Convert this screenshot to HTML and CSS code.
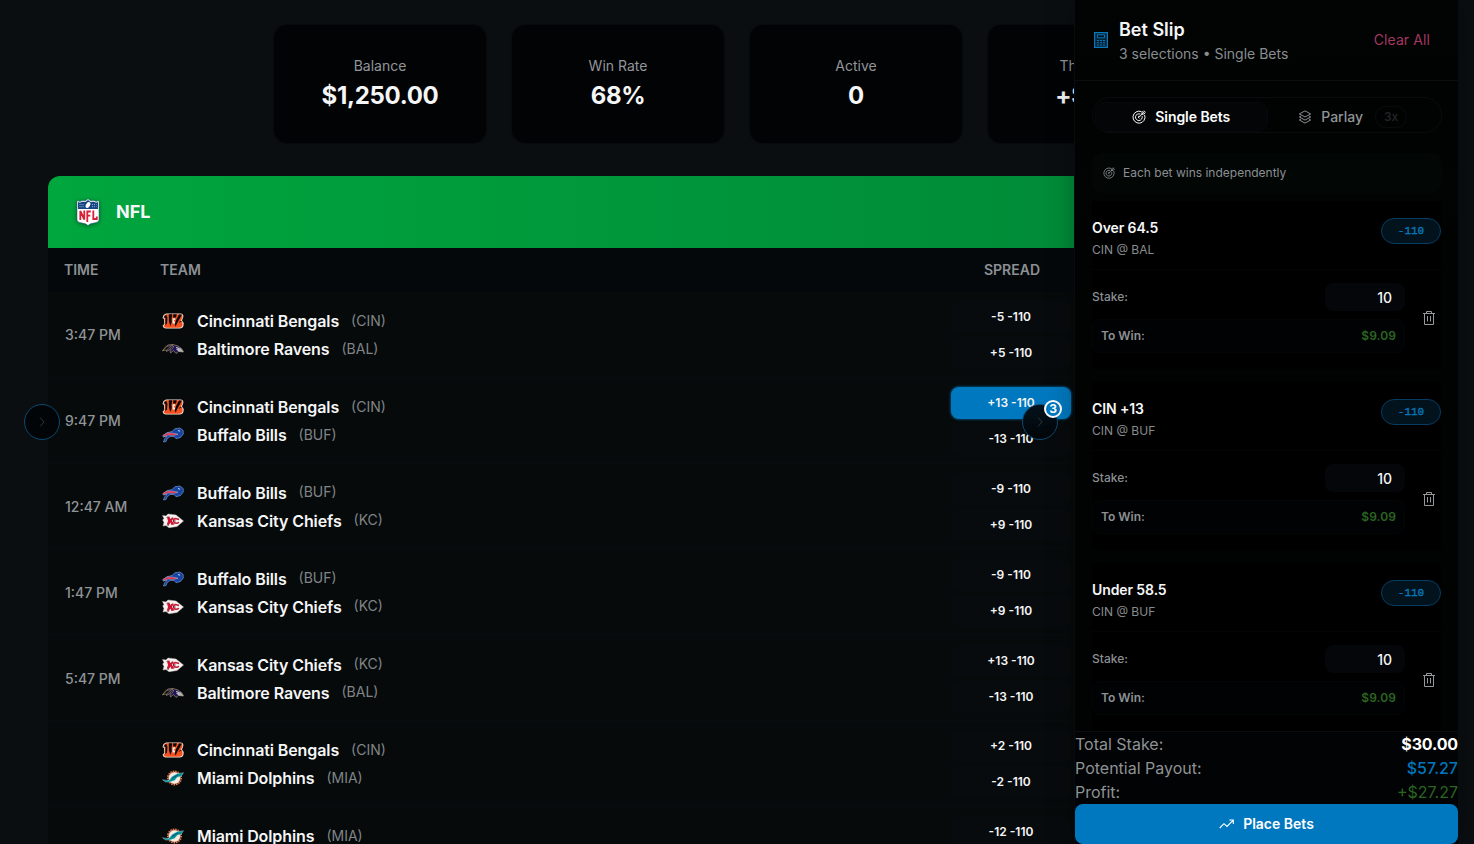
FILE: index.html
```
<!DOCTYPE html>
<html lang="en">
<head>
<meta charset="utf-8">
<title>Sportsbook</title>
<link rel="stylesheet" href="styles.css">
</head>
<body>
<svg class="sprite" aria-hidden="true">
  <symbol id="cin" viewBox="0 0 22 16">
    <path d="M1.500 2 4 .5H18.500Q21.800 .6 21.300 4L20 7.500Q22 9 21.500 12.500Q21 15.500 17.500 15.500H4Q1 15.500 .6 12.500L2.300 11 2 6 .5 5Z" fill="#f4e2d8"/>
    <path d="M2.300 2.300 4.500 1.300H18.500Q20.800 1.500 20.500 4L19 7.500Q21 9 20.600 12.200Q20 14.700 17 14.700H4.500Q2 14.600 1.400 12.700L3.200 11.500Z" fill="#f4511e"/>
    <path d="M1.300 4.200 4.300 1.700 5.400 5 5 10.500 3.300 12.300 3.500 5ZM6.800 1.300H10.300L9.600 5 9.700 9.500 8.300 13 7 8.500ZM11.300 1.300H14.800L14 4.600H11ZM17 1.500H20L17.500 6 15.500 9.500 13.500 13.700 12.800 11 14.300 6.500ZM20 8 16.800 10 18 8Z" fill="#0b0908"/>
    <path d="M10.600 5.300H13.200V7H12V8.600H13V10.500H10.600Z" fill="#f5eee9"/>
  </symbol>
  <symbol id="bal" viewBox="0 0 22 16">
    <path d="M.5 10 3 6.500 6 4 11 3.500 16 5 20 8 21.500 11 16.500 10.500 14 12.500 11.500 9.500 8.500 12 8 8.500 4.500 10.500 4 8Z" fill="#1d145a" stroke="#a8946a" stroke-width=".7"/>
    <path d="M1 9.500 5 5.500 11 4 7 6.500 5 9ZM8 7.500 12 5 10 8.500Z" fill="#090909" stroke="#ae996a" stroke-width=".5"/>
    <path d="M14 8 18.500 7 21.500 11 16.500 10.500Z" fill="#b9b6b3"/>
    <path d="M14 6.500 17 7.300" stroke="#fff" stroke-width=".8"/>
  </symbol>
  <symbol id="buf" viewBox="0 0 22 16">
    <path d="M1 8.500 5 5.700 10 4.500 13 1.700 18 1 21.200 3.500 21.300 7 18.500 10.500 14 11.700 12 9.500 8 9.500 5 12 4 14.500 1.500 15 2.500 12 5 9.500 1 10Z" fill="#1746a2" stroke="#85a5dc" stroke-width=".6"/>
    <path d="M1 8.500 5.500 6 11 6.200 16 7.200 12 8.300 6 8 2 9.500Z" fill="#e12242" stroke="#e8d5e0" stroke-width=".4"/>
    <path d="M16 3.500 18 4.200" stroke="#fff" stroke-width=".8"/>
  </symbol>
  <symbol id="kc" viewBox="0 0 22 16">
    <path d="M.5 2.500 4 3 6 1 14 2 21.500 8 15 13.500 7 14.700 4 12.500 1 13 2 9.500 .7 7 2 5.500Z" fill="#f5f3f1" stroke="#c9bdb8" stroke-width=".5"/>
    <path d="M5 4.500 7.500 3.500 8.200 6 10.500 4.200 12 5 9.800 7.800 12.500 11.500 9.500 12 8.300 9.500 7 12 4.800 11.500 6 8Z" fill="#c81733"/>
    <path d="M17 6.500 13.500 5.500Q10.800 6.500 11.800 9Q13.500 11.300 17 9.300" fill="none" stroke="#c81733" stroke-width="1.500"/>
    <path d="M4.500 4.500 6.500 3.500M5 12 7 12.500M11 8H14" stroke="#371a1c" stroke-width=".6"/>
  </symbol>
  <symbol id="mia" viewBox="0 0 22 16">
    <circle cx="12.500" cy="8" r="6.800" fill="none" stroke="#e87850" stroke-width="1.500" stroke-dasharray="1.500 1"/>
    <circle cx="12.500" cy="8" r="5.900" fill="#f8eee6" stroke="#f58b5c" stroke-width=".6"/>
    <path d="M.5 9.800 3.500 10.200 7 10.500 10 6.500 15 3.800 21.500 2.700 19 6.500 15.500 7 12.500 10.500 7.500 12 3.500 12Z" fill="#008e97" stroke="#b7dee0" stroke-width=".4"/>
    <path d="M10 8.500 16 4.800" stroke="#064c68" stroke-width=".8"/>
  </symbol>
  <symbol id="target" viewBox="0 0 16 16">
    <g fill="none" stroke="currentColor" stroke-width="1.100" stroke-linecap="round" stroke-linejoin="round">
      <path d="M10.500 1.700A6.900 6.900 0 1 0 14.600 6"/>
      <path d="M9.200 4.500A3.900 3.900 0 1 0 11.700 7.400"/>
      <path d="M8 9.200A1.200 1.200 0 0 1 8 6.900M8 8.200 14.700 1.500M11.500 4.700V2.600L13 1.100M11.500 4.700H13.600L15.100 3.200"/>
    </g>
  </symbol>
  <symbol id="trash" viewBox="0 0 12 14">
    <path d="M0 2.500H12M3.500 2.300V.5H8.500V2.300M1.500 2.700V13.500H10.500V2.700M4.500 5V10.500M7.500 5V10.500" fill="none" stroke="currentColor" stroke-width="1"/>
  </symbol>
  <symbol id="chev" viewBox="0 0 6 10"><path d="M1 .5 5 5 1 9.500" fill="none" stroke="currentColor"/></symbol>
</svg>

<main class="page">
  <section class="stats">
    <div class="stat"><span>Balance</span><strong>$1,250.00</strong></div>
    <div class="stat"><span>Win Rate</span><strong>68%</strong></div>
    <div class="stat"><span>Active</span><strong>0</strong></div>
    <div class="stat"><span>This Week</span><strong>+$320</strong></div>
  </section>

  <section class="league">
    <header class="league-head">
      <svg class="nfl" viewBox="0 0 24 28">
        <path d="M12 .7 14.500 2.800 18 2.500 20 3.500 23 2.500V22Q22.500 24.500 18 25 14 25.300 12 27.500 10 25.300 6 25 1.500 24.500 1 22V2.500L4 3.500 6 2.500 9.500 2.800Z" fill="#fff" stroke="#254a7e" stroke-width=".5"/>
        <path d="M2 4 4 4.800 6 3.800 9.500 4 12 2 14.500 4 18 3.800 20 4.800 22 4V11H2Z" fill="#174583"/>
        <path d="M3.500 6.500H8M3.500 8.700H8M16 6.500H20.500M16 8.700H20.500" stroke="#b9c9df" stroke-width=".8" stroke-dasharray="1 1"/>
        <ellipse cx="12" cy="7" rx="2" ry="3.200" transform="rotate(30 12 7)" fill="#fff"/>
        <path d="M2.500 12H21.500V21.800Q21 23.300 17.500 23.500 14 23.700 12 25.500 10 23.700 6.500 23.500 3 23.300 2.500 21.800Z" fill="#fff"/>
        <path d="M4.300 22V13L8.300 21.500V12.500M11.300 24V13.500H14.800M11.300 17.700H14.300M17.300 12.500V21H20.800V18.500" fill="none" stroke="#d91f38" stroke-width="1.800"/>
      </svg>
      <h2>NFL</h2>
    </header>
    <div class="cols"><span>TIME</span><span>TEAM</span><span class="c">SPREAD</span></div>

    <div class="game"><time>3:47 PM</time>
      <div class="teams"><p><svg><use href="#cin"/></svg><b>Cincinnati Bengals</b><i>(CIN)</i></p><p><svg><use href="#bal"/></svg><b>Baltimore Ravens</b><i>(BAL)</i></p></div>
      <div class="odds"><button>-5 -110</button><button>+5 -110</button></div></div>
    <div class="game"><time>9:47 PM</time>
      <div class="teams"><p><svg><use href="#cin"/></svg><b>Cincinnati Bengals</b><i>(CIN)</i></p><p><svg><use href="#buf"/></svg><b>Buffalo Bills</b><i>(BUF)</i></p></div>
      <div class="odds"><button class="picked">+13 -110</button><button>-13 -110</button></div></div>
    <div class="game"><time>12:47 AM</time>
      <div class="teams"><p><svg><use href="#buf"/></svg><b>Buffalo Bills</b><i>(BUF)</i></p><p><svg><use href="#kc"/></svg><b>Kansas City Chiefs</b><i>(KC)</i></p></div>
      <div class="odds"><button>-9 -110</button><button>+9 -110</button></div></div>
    <div class="game"><time>1:47 PM</time>
      <div class="teams"><p><svg><use href="#buf"/></svg><b>Buffalo Bills</b><i>(BUF)</i></p><p><svg><use href="#kc"/></svg><b>Kansas City Chiefs</b><i>(KC)</i></p></div>
      <div class="odds"><button>-9 -110</button><button>+9 -110</button></div></div>
    <div class="game"><time>5:47 PM</time>
      <div class="teams"><p><svg><use href="#kc"/></svg><b>Kansas City Chiefs</b><i>(KC)</i></p><p><svg><use href="#bal"/></svg><b>Baltimore Ravens</b><i>(BAL)</i></p></div>
      <div class="odds"><button>+13 -110</button><button>-13 -110</button></div></div>
    <div class="game"><time></time>
      <div class="teams"><p><svg><use href="#cin"/></svg><b>Cincinnati Bengals</b><i>(CIN)</i></p><p><svg><use href="#mia"/></svg><b>Miami Dolphins</b><i>(MIA)</i></p></div>
      <div class="odds"><button>+2 -110</button><button>-2 -110</button></div></div>
    <div class="game"><time></time>
      <div class="teams"><p><svg><use href="#mia"/></svg><b>Miami Dolphins</b><i>(MIA)</i></p></div>
      <div class="odds"><button>-12 -110</button></div></div>
  </section>
</main>

<button class="toggle left"><svg><use href="#chev"/></svg></button>
<button class="toggle right"><svg><use href="#chev"/></svg><span class="count">3</span></button>

<aside class="slip">
  <header class="slip-head">
    <svg class="calc" viewBox="0 0 14 16"><path d="M.6.6H13.400V15.400H.6Z" fill="#04243a" stroke="#0878b8" stroke-width="1.200"/><path d="M3.500 2.800H10.500V5.800H3.500Z" fill="#031522" stroke="#0878b8"/><path d="M3 8.500H5M6 8.500H8M9 8.500H11M3 10.700H5M6 10.700H8M9 10.700H11M3 13H5M6 13H8M9 13H11" stroke="#0878b8" stroke-width="1.100"/></svg>
    <div class="slip-title"><h2>Bet Slip</h2><p>3 selections • Single Bets</p></div>
    <button class="clear">Clear All</button>
  </header>
  <div class="slip-body">
    <div class="tabs">
      <button class="tab on"><svg><use href="#target"/></svg>Single Bets</button>
      <button class="tab"><svg viewBox="0 0 16 16" fill="none" stroke="currentColor" stroke-width="1.100" stroke-linejoin="round"><path d="M8 1 14.500 4.500 8 8 1.500 4.500ZM3.500 6.800 1.500 8 8 11.500 14.500 8 12.500 6.800M3.500 10.200 1.500 11.400 8 15 14.500 11.400 12.500 10.200"/></svg>Parlay<span class="mult">3x</span></button>
    </div>
    <div class="note"><svg><use href="#target"/></svg>Each bet wins independently</div>

    <article class="bet">
      <div class="bet-top"><div><h3>Over 64.5</h3><p>CIN @ BAL</p></div><span class="price">-110</span></div>
      <div class="bet-main"><div class="fields"><div class="stake"><label>Stake:</label><span class="amount">10</span></div><div class="win"><span>To Win:</span><b>$9.09</b></div></div><svg class="trash"><use href="#trash"/></svg></div>
    </article>
    <article class="bet">
      <div class="bet-top"><div><h3>CIN +13</h3><p>CIN @ BUF</p></div><span class="price">-110</span></div>
      <div class="bet-main"><div class="fields"><div class="stake"><label>Stake:</label><span class="amount">10</span></div><div class="win"><span>To Win:</span><b>$9.09</b></div></div><svg class="trash"><use href="#trash"/></svg></div>
    </article>
    <article class="bet">
      <div class="bet-top"><div><h3>Under 58.5</h3><p>CIN @ BUF</p></div><span class="price">-110</span></div>
      <div class="bet-main"><div class="fields"><div class="stake"><label>Stake:</label><span class="amount">10</span></div><div class="win"><span>To Win:</span><b>$9.09</b></div></div><svg class="trash"><use href="#trash"/></svg></div>
    </article>
  </div>
  <footer class="totals">
    <p><span>Total Stake:</span><strong>$30.00</strong></p>
    <p><span>Potential Payout:</span><span class="payout">$57.27</span></p>
    <p><span>Profit:</span><span class="profit">+$27.27</span></p>
    <button class="place"><svg viewBox="0 0 15 10" fill="none" stroke="currentColor" stroke-width="1.100"><path d="M.7 9 5 4.700 8 7.500 14 1.300M10.300 1H14.300V5"/></svg>Place Bets</button>
  </footer>
</aside>
</body>
</html>
```

FILE: styles.css
```
* { box-sizing: border-box; margin: 0; padding: 0; }
body {
  width: 1474px; height: 844px; overflow: hidden; position: relative;
  background: #0a0e11; color: #f5f6f7;
  font-family: Inter, "Liberation Sans", sans-serif;
}
button { font: inherit; color: inherit; border: 0; background: none; }
svg { display: block; flex: none; }
.sprite { position: absolute; width: 0; height: 0; }

.page { padding: 25px 48px 0; height: 844px; overflow: hidden; }
.stats { display: grid; grid-template-columns: repeat(4, 212px); gap: 26px; padding-left: 226px; }
.stat {
  height: 118px; border-radius: 14px; background: #020305; box-shadow: 0 0 2px #020305;
  display: flex; flex-direction: column; align-items: center; padding-top: 31px;
}
.stat span { font-size: 14px; line-height: 20px; color: #92969a; }
.stat strong { font-size: 24px; line-height: 32px; font-weight: 700; margin-top: 4px; letter-spacing: -.3px; }

.league { margin-top: 33px; border-radius: 12px 12px 0 0; overflow: hidden; background: #060a0b; }
.league-head {
  height: 72px; display: flex; align-items: center; gap: 16px; padding-left: 28px;
  background: linear-gradient(90deg, #00a63e, #008236);
}
.league-head h2 { font-size: 18px; line-height: 24px; font-weight: 700; }
.nfl { width: 24px; height: 28px; filter: drop-shadow(0 1px 2px rgba(0, 0, 0, .4)); }
.cols, .game { display: grid; grid-template-columns: 96px 791px 120px; padding-left: 16px; }
.cols { height: 44px; padding-bottom: 2px; align-items: center; background: #04080b; font-size: 14px; font-weight: 600; color: #8c9094; }
.cols .c { text-align: center; padding-left: 2px; }
.game { height: 85.800px; padding-top: 15.350px; border-bottom: 1px solid #080c0e; }
.game time { font-size: 14px; font-weight: 500; color: #909496; line-height: 56px; padding-left: 1px; }
.teams p { display: flex; align-items: center; height: 28px; padding-left: 2px; }
.teams svg { width: 22px; height: 16px; }
.teams b { font-size: 16px; font-weight: 600; margin-left: 13px; letter-spacing: -.1px; }
.teams i { font-size: 14px; line-height: 18px; padding-bottom: 1px; font-style: normal; color: #808487; margin-left: 12px; }
.odds { display: flex; flex-direction: column; gap: 4px; margin-top: -6px; }
.odds button { height: 32px; flex: none; border-radius: 8px; background: #080b0d; font-size: 12px; line-height: 14px; font-weight: 600; }
.odds .picked { background: #0078bf; box-shadow: 0 0 3px #0078bf; }

.toggle {
  position: absolute; top: 404px; width: 36px; height: 36px; border-radius: 50%;
  border: 1px solid #0b4a70; background: #020507; color: #303438;
  display: flex; align-items: center; justify-content: center;
}
.toggle svg { width: 6px; height: 10px; }
.left { left: 24px; }
.right { left: 1022px; background: linear-gradient(#04121c, #020507); }
.count {
  position: absolute; left: 21px; top: -5px; width: 18px; height: 18px; border-radius: 50%;
  border: 2px solid #fff; background: #0078bf; color: #fff; font-size: 12px; line-height: 14px; font-weight: 700;
}

.slip {
  position: absolute; left: 1074px; top: 0; width: 384px; height: 844px;
  background: linear-gradient(#020303 0, #010202 100px, #010403 190px, #010202 280px);
  border-left: 1px solid #090c0e; display: flex; flex-direction: column;
  box-shadow: 0 0 26px rgba(0, 0, 0, .28);
}
.slip-head { flex: none; height: 81px; border-bottom: 1px solid #0b0e0f; display: flex; align-items: center; padding: 0 28px 0 19px; }
.calc { width: 14px; height: 16px; }
.slip-title { margin-left: 11px; flex: 1; padding-top: 3px; }
.slip-title h2 { font-size: 18px; line-height: 24px; font-weight: 600; }
.slip-title p { font-size: 14px; line-height: 24px; color: #898d90; }
.clear { font-size: 14px; line-height: 18px; padding-bottom: 1px; color: #a33861; letter-spacing: .1px; }
.slip-body { flex: 1; min-height: 0; overflow: hidden; padding: 16px 16px 0 17px; }
.tabs { display: flex; height: 36px; border: 1px solid #090c0e; border-radius: 18px; padding: 4px 3px 0 2px; }
.tab { flex: 1; display: flex; align-items: center; justify-content: center; font-size: 14px; line-height: 18px; font-weight: 500; color: #909497; padding-bottom: 1px; }
.tab svg { width: 14px; height: 14px; margin-right: 9px; }
.tab.on { background: #030507; border: 1px solid #07090c; border-radius: 10px; color: #fff; font-weight: 600; letter-spacing: -.05px; }
.mult { margin-left: 12px; border: 1px solid #090c0e; border-radius: 12px; font-size: 12px; line-height: 20px; padding: 0 8px; color: #24272a; }
.note { margin-top: 20px; height: 40px; padding-bottom: 1px; border-radius: 10px; background: #020605; display: flex; align-items: center; padding-left: 11px; font-size: 12px; line-height: 15px; color: #8b8f92; }
.note svg { width: 12px; height: 12px; margin-right: 8px; }
.bet { margin: 8px 1px 13px 0; height: 168px; background: #000; padding-top: 17px; }
.bet + .bet { margin-top: 0; }
.bet-top { display: flex; justify-content: space-between; height: 52px; border-bottom: 1px solid #030405; }
.bet h3 { font-size: 14px; line-height: 20px; font-weight: 600; letter-spacing: -.1px; }
.bet-top p { font-size: 12px; line-height: 18px; margin-top: 3px; color: #888c8f; }
.price {
  width: 60px; height: 26px; border: 1px solid #063d60; border-radius: 13px; background: #02131e; color: #0878b8;
  font: 400 11px/25px "Liberation Mono", monospace; -webkit-text-stroke: .35px #0878b8; text-align: center;
}
.bet-main { display: flex; align-items: center; justify-content: space-between; padding: 13px 6px 0 0; }
.fields { width: 313px; }
.stake { display: flex; justify-content: space-between; height: 28px; }
.stake label { font-size: 12px; font-weight: 500; line-height: 28px; color: #8b8f92; }
.amount { width: 80px; border-radius: 8px; background: #040609; text-align: right; padding-right: 13px; font-size: 14px; font-weight: 500; line-height: 30px; }
.win { display: flex; justify-content: space-between; margin-top: 8px; height: 34px; border: 1px solid #040606; border-radius: 8px; background: #010203; padding: 0 8px; font-size: 12px; line-height: 32px; font-weight: 600; color: #8d9194; }
.win b { color: #2b6522; font-weight: 600; letter-spacing: .1px; }
.trash { width: 12px; height: 14px; color: #96999b; margin-bottom: 1px; }
.totals { flex: none; border-top: 1px solid #0b0e10; background: #020304; font-size: 16px; line-height: 24px; }
.totals p { display: flex; justify-content: space-between; color: #8e9295; }
.totals strong { color: #fff; font-weight: 700; letter-spacing: -.15px; }
.totals .payout { color: #0078bf; font-weight: 500; }
.totals .profit { color: #2b6522; }
.place { width: 100%; height: 40px; border-radius: 8px; background: #0078bf; color: #fff; font-size: 14px; font-weight: 600; display: flex; align-items: center; justify-content: center; }
.place svg { width: 15px; height: 10px; margin-right: 9px; }
```
